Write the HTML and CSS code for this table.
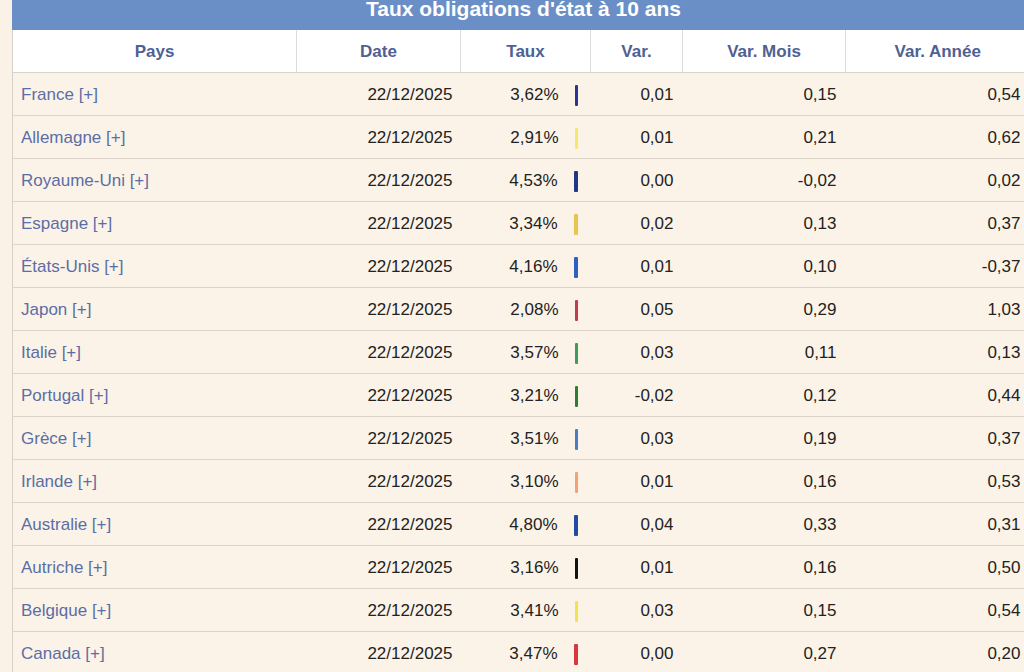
FILE: index.html
```html
<!DOCTYPE html>
<html lang="fr">
<head>
<meta charset="utf-8">
<title>Taux obligations d'état à 10 ans</title>
<link rel="stylesheet" href="styles.css">
</head>
<body>
<div class="wrap">
  <div class="title"><span>Taux obligations d'état à 10 ans</span></div>
  <table class="rates">
    <colgroup>
      <col class="c-pays"><col class="c-date"><col class="c-taux"><col class="c-var"><col class="c-mois"><col class="c-annee">
    </colgroup>
    <thead>
      <tr><th>Pays</th><th>Date</th><th>Taux</th><th>Var.</th><th>Var. Mois</th><th>Var. Année</th></tr>
    </thead>
    <tbody>
      <tr><td class="pays"><a>France [+]</a></td><td class="num">22/12/2025</td><td class="taux"><span>3,62%</span><i class="bar b-fr"></i></td><td class="num">0,01</td><td class="num">0,15</td><td class="num">0,54</td></tr>
      <tr><td class="pays"><a>Allemagne [+]</a></td><td class="num">22/12/2025</td><td class="taux"><span>2,91%</span><i class="bar b-de"></i></td><td class="num">0,01</td><td class="num">0,21</td><td class="num">0,62</td></tr>
      <tr><td class="pays"><a>Royaume-Uni [+]</a></td><td class="num">22/12/2025</td><td class="taux"><span>4,53%</span><i class="bar b-uk"></i></td><td class="num">0,00</td><td class="num">-0,02</td><td class="num">0,02</td></tr>
      <tr><td class="pays"><a>Espagne [+]</a></td><td class="num">22/12/2025</td><td class="taux"><span>3,34%</span><i class="bar b-es"></i></td><td class="num">0,02</td><td class="num">0,13</td><td class="num">0,37</td></tr>
      <tr><td class="pays"><a>États-Unis [+]</a></td><td class="num">22/12/2025</td><td class="taux"><span>4,16%</span><i class="bar b-us"></i></td><td class="num">0,01</td><td class="num">0,10</td><td class="num">-0,37</td></tr>
      <tr><td class="pays"><a>Japon [+]</a></td><td class="num">22/12/2025</td><td class="taux"><span>2,08%</span><i class="bar b-jp"></i></td><td class="num">0,05</td><td class="num">0,29</td><td class="num">1,03</td></tr>
      <tr><td class="pays"><a>Italie [+]</a></td><td class="num">22/12/2025</td><td class="taux"><span>3,57%</span><i class="bar b-it"></i></td><td class="num">0,03</td><td class="num">0,11</td><td class="num">0,13</td></tr>
      <tr><td class="pays"><a>Portugal [+]</a></td><td class="num">22/12/2025</td><td class="taux"><span>3,21%</span><i class="bar b-pt"></i></td><td class="num">-0,02</td><td class="num">0,12</td><td class="num">0,44</td></tr>
      <tr><td class="pays"><a>Grèce [+]</a></td><td class="num">22/12/2025</td><td class="taux"><span>3,51%</span><i class="bar b-gr"></i></td><td class="num">0,03</td><td class="num">0,19</td><td class="num">0,37</td></tr>
      <tr><td class="pays"><a>Irlande [+]</a></td><td class="num">22/12/2025</td><td class="taux"><span>3,10%</span><i class="bar b-ie"></i></td><td class="num">0,01</td><td class="num">0,16</td><td class="num">0,53</td></tr>
      <tr><td class="pays"><a>Australie [+]</a></td><td class="num">22/12/2025</td><td class="taux"><span>4,80%</span><i class="bar b-au"></i></td><td class="num">0,04</td><td class="num">0,33</td><td class="num">0,31</td></tr>
      <tr><td class="pays"><a>Autriche [+]</a></td><td class="num">22/12/2025</td><td class="taux"><span>3,16%</span><i class="bar b-at"></i></td><td class="num">0,01</td><td class="num">0,16</td><td class="num">0,50</td></tr>
      <tr><td class="pays"><a>Belgique [+]</a></td><td class="num">22/12/2025</td><td class="taux"><span>3,41%</span><i class="bar b-be"></i></td><td class="num">0,03</td><td class="num">0,15</td><td class="num">0,54</td></tr>
      <tr><td class="pays"><a>Canada [+]</a></td><td class="num">22/12/2025</td><td class="taux"><span>3,47%</span><i class="bar b-ca"></i></td><td class="num">0,00</td><td class="num">0,27</td><td class="num">0,20</td></tr>
    </tbody>
  </table>
</div>
</body>
</html>
```

FILE: styles.css
```css
html, body {
  margin: 0;
  padding: 0;
  height: 672px;
  overflow: hidden;
  background: #fbf2e7;
  font-family: "Liberation Sans", Arial, sans-serif;
}

.wrap {
  width: 1017px;
  margin-left: 12px;
}

.title {
  height: 30px;
  background: #6a8fc6;
  color: #ffffff;
  font-weight: bold;
  font-size: 21px;
  text-align: center;
  overflow: hidden;
}

.title span {
  display: block;
  line-height: 17px;
  padding-left: 6px;
}

.rates {
  width: 1017px;
  border-collapse: collapse;
  table-layout: fixed;
  font-size: 17px;
  border-left: 1px solid #d6d0c9;
}

.c-pays { width: 284px; }
.c-date { width: 164px; }
.c-taux { width: 130px; }
.c-var { width: 92px; }
.c-mois { width: 163px; }
.c-annee { width: 184px; }

.rates th {
  height: 41px;
  padding: 1px 0 0;
  background: #ffffff;
  color: #4f6192;
  font-weight: bold;
  text-align: center;
  border-left: 1px solid #dcdcdc;
  border-bottom: 1px solid #d6d2cc;
}

.rates th:first-child { border-left: none; }

.rates td {
  height: 40px;
  padding: 2px 9px 0 8px;
  background: #fcf3e8;
  color: #222222;
  border-bottom: 1px solid #dcd3c9;
  white-space: nowrap;
}

.rates td.pays {
  text-align: left;
  padding-left: 8px;
}

.pays a {
  color: #5a6ea6;
  text-decoration: none;
}

.rates td.num {
  text-align: right;
}

.rates td:nth-child(2) { padding-right: 8px; }

.rates td.taux {
  text-align: right;
  padding-right: 13px;
}

.taux span {
  vertical-align: middle;
}

.bar {
  display: inline-block;
  width: 3px;
  height: 21px;
  margin-left: 16px;
  vertical-align: middle;
  border-radius: 1px;
}

.b-fr { background: #2c3491; }
.b-de { background: #f6e86e; }
.b-uk { background: #1f3785; width: 4px; }
.b-es { background: #e8c64e; width: 4px; }
.b-us { background: #2f5fc0; width: 4px; }
.b-jp { background: #c13a4e; }
.b-it { background: #3d9b5c; }
.b-pt { background: #2e7d33; }
.b-gr { background: #4a7bc9; }
.b-ie { background: #f2a276; }
.b-au { background: #1f4aa6; width: 4px; }
.b-at { background: #121212; }
.b-be { background: #f4e34c; }
.b-ca { background: #d8373d; width: 4px; }
```
